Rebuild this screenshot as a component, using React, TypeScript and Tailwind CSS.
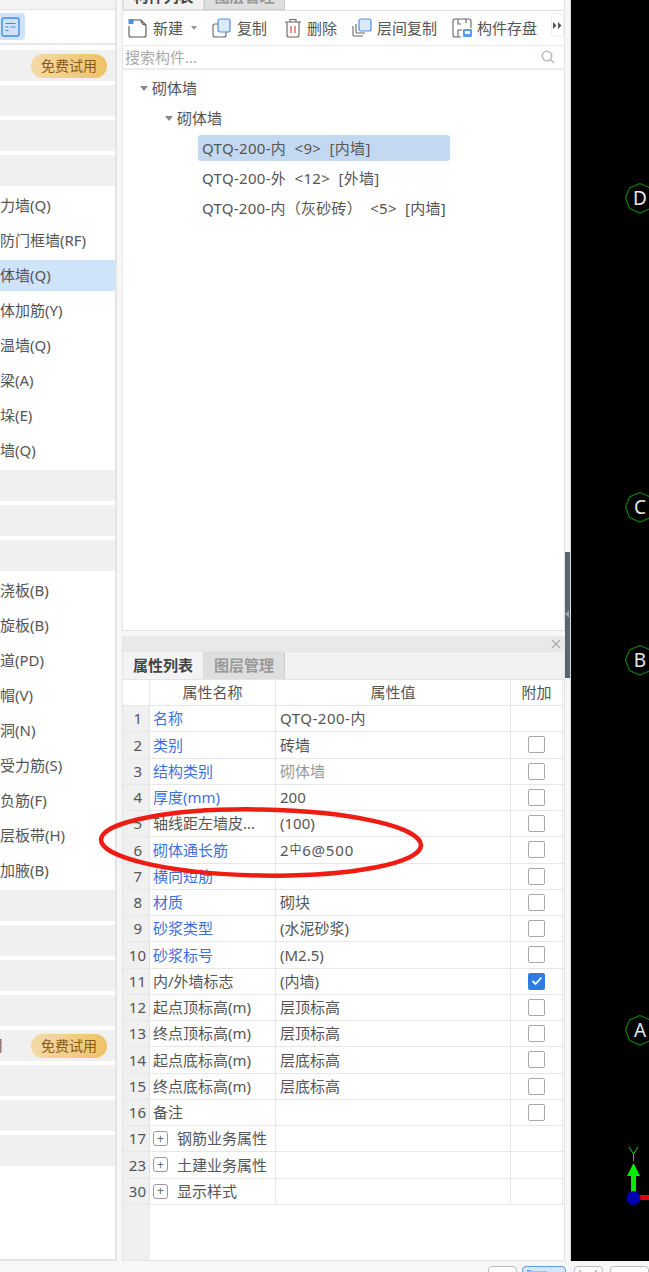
import React from "react";

const font = { fontFamily: '"Noto Sans", "Noto Sans CJK SC", sans-serif' };

function Badge() {
  return (
    <span className="mr-[8px] ml-auto flex h-[24px] w-[76px] shrink-0 items-center justify-center rounded-full bg-gradient-to-r from-[#f5d9a8] to-[#eec264] text-[14px] text-[#8a5a1a]">
      免费试用
    </span>
  );
}

function GrayRow({ badge }: { badge?: boolean }) {
  return (
    <div className="mb-[4px] flex h-[31px] items-center bg-[#f0f0f0]">
      {badge && <Badge />}
    </div>
  );
}

function TextRow({ t, sel }: { t: string; sel?: boolean }) {
  return (
    <div className={`mb-[4px] flex h-[31px] items-center whitespace-nowrap text-[15px] text-[#555] ${sel ? "bg-[#cfe3f9]" : ""}`}>
      {t}
    </div>
  );
}

function Sidebar() {
  const a = ["力墙(Q)", "防门框墙(RF)", "体墙(Q)", "体加筋(Y)", "温墙(Q)", "梁(A)", "垛(E)", "墙(Q)"];
  const b = ["浇板(B)", "旋板(B)", "道(PD)", "帽(V)", "洞(N)", "受力筋(S)", "负筋(F)", "层板带(H)", "加腋(B)"];
  return (
    <div className="flex h-full w-[117px] shrink-0 flex-col border-r-2 border-b-2 border-[#e4e4e4] bg-white">
      <div className="h-[10px] border-b border-[#e4e4e4] bg-[#f3f3f3]" />
      <div className="flex h-[35px] items-center border-b-2 border-[#e8e8e8]">
        <div className="flex h-[27px] w-[25px] items-center justify-start rounded-r-[4px] bg-[#cfe2f8] pl-[1px]">
          <svg width="19" height="20" viewBox="0 0 19 20" fill="none">
            <rect x="1" y="1" width="17" height="18" rx="2" stroke="#3f8ce8" strokeWidth="1.4" />
            <path d="M4.5 6.5h10M4.5 10h3M9.5 10h5M4.5 13.5h3" stroke="#3f8ce8" strokeWidth="1.2" />
          </svg>
        </div>
      </div>
      <div className="h-[5px]" />
      <GrayRow badge />
      <GrayRow />
      <GrayRow />
      <GrayRow />
      {a.map((t, i) => (
        <TextRow key={t} t={t} sel={i === 2} />
      ))}
      <GrayRow />
      <GrayRow />
      <GrayRow />
      {b.map((t) => (
        <TextRow key={t} t={t} />
      ))}
      <GrayRow />
      <GrayRow />
      <GrayRow />
      <GrayRow />
      <div className="mb-[4px] flex h-[31px] items-center overflow-hidden bg-[#f0f0f0]">
        <span className="ml-[-12px] text-[15px] text-[#666]">用</span>
        <Badge />
      </div>
      <GrayRow />
      <GrayRow />
      <GrayRow />
    </div>
  );
}

function Tool({ icon, label, extra }: { icon: React.ReactNode; label: string; extra?: React.ReactNode }) {
  return (
    <div className="flex items-center gap-[5px] whitespace-nowrap text-[15px] text-[#555]">
      {icon}
      <span>{label}</span>
      {extra}
    </div>
  );
}

function Toolbar() {
  return (
    <div className="flex h-[35px] items-center border-b border-[#e8e8e8] pl-[5px]">
      <div className="mr-[15px]">
        <Tool
          label="新建"
          extra={<span className="ml-[3px] h-0 w-0 border-x-[3px] border-t-[4px] border-x-transparent border-t-[#999]" />}
          icon={
            <svg width="20" height="20" viewBox="0 0 20 20" fill="none">
              <path d="M5 2h8l5 5v10a2 2 0 0 1-2 2H3a2 2 0 0 1-2-2V8" stroke="#555" strokeWidth="1.1" />
              <path d="M13 2c0 3 1.5 5 5 5" stroke="#555" strokeWidth="1.1" />
              <rect x="0.5" y="1" width="5" height="5" fill="#4a90e8" />
            </svg>
          }
        />
      </div>
      <div className="mr-[17px]">
        <Tool
          label="复制"
          icon={
            <svg width="20" height="20" viewBox="0 0 20 20" fill="none">
              <rect x="1" y="6" width="13" height="13" rx="2" stroke="#666" strokeWidth="1.1" />
              <rect x="6" y="1" width="12" height="13" rx="2" fill="#dbe9fb" stroke="#4a90e8" strokeWidth="1.2" />
            </svg>
          }
        />
      </div>
      <div className="mr-[15px]">
        <Tool
          label="删除"
          icon={
            <svg width="18" height="20" viewBox="0 0 18 20" fill="none">
              <path d="M1 4h16M6 4V1.5h6V4" stroke="#666" strokeWidth="1.1" />
              <path d="M3 4v13a2 2 0 0 0 2 2h8a2 2 0 0 0 2-2V4" stroke="#666" strokeWidth="1.1" />
              <path d="M7 8v7M11 8v7" stroke="#e0453a" strokeWidth="1.2" />
            </svg>
          }
        />
      </div>
      <div className="mr-[15px]">
        <Tool
          label="层间复制"
          icon={
            <svg width="20" height="20" viewBox="0 0 20 20" fill="none">
              <path d="M1 8v9a1 1 0 0 0 1 1h9" stroke="#666" strokeWidth="1.1" />
              <path d="M4 6v8a1 1 0 0 0 1 1h8" stroke="#666" strokeWidth="1.1" />
              <rect x="7" y="1" width="12" height="12" rx="2" fill="#dbe9fb" stroke="#4a90e8" strokeWidth="1.2" />
            </svg>
          }
        />
      </div>
      <Tool
        label="构件存盘"
        icon={
          <svg width="20" height="20" viewBox="0 0 20 20" fill="none">
            <path d="M9 19H3a2 2 0 0 1-2-2V3a2 2 0 0 1 2-2h14a2 2 0 0 1 2 2v7" stroke="#666" strokeWidth="1.1" />
            <path d="M6 1v5h3M14 1v4M6 19v-7h4" stroke="#666" strokeWidth="1.1" />
            <rect x="11" y="11" width="9" height="8" rx="1" fill="#5a9fee" />
            <rect x="13" y="13" width="5" height="3" fill="#fff" />
          </svg>
        }
      />
      <div className="mt-[-6px] ml-auto flex h-[24px] w-[13px] items-center justify-center rounded-[4px] border border-[#eee] text-[#555]">
        <svg width="9" height="7" viewBox="0 0 9 7" fill="#555">
          <path d="M0 0l3.5 3.5L0 7zM5 0l3.5 3.5L5 7z" />
        </svg>
      </div>
    </div>
  );
}

function TreeRow({ children, pl, caret, sel }: { children: React.ReactNode; pl: string; caret?: boolean; sel?: boolean }) {
  return (
    <div className={`flex h-[30px] items-center whitespace-pre ${pl}`}>
      {caret && <span className="mr-[4px] h-0 w-0 border-x-[4px] border-t-[5px] border-x-transparent border-t-[#888]" />}
      {sel ? (
        <span className="flex h-[26px] w-[252px] items-center rounded-[3px] bg-[#c3d9f1] pl-[4px]">{children}</span>
      ) : (
        children
      )}
    </div>
  );
}

function ComponentList() {
  return (
    <div className="flex h-[631px] flex-col border-x border-b border-[#e4e4e4] bg-white">
      <div className="flex h-[11px] items-end overflow-hidden border-b border-[#e0e0e0] bg-white">
        <div className="flex h-[28px] w-[81px] shrink-0 items-center justify-center border border-[#ddd] bg-[#f2f2f2] text-[15px] font-bold text-[#444]">
          构件列表
        </div>
        <div className="flex h-[28px] w-[81px] shrink-0 items-center justify-center border border-[#ccc] bg-[#dedede] text-[15px] font-bold text-[#999]">
          图层管理
        </div>
      </div>
      <Toolbar />
      <div className="flex h-[24px] items-center justify-between border-b-2 border-[#ececec] pr-[9px] pl-[2px] text-[15px] text-[#aaa]">
        <span>搜索构件...</span>
        <svg width="14" height="14" viewBox="0 0 14 14" fill="none">
          <circle cx="6" cy="6" r="4.7" stroke="#bbb" strokeWidth="1.6" />
          <path d="M9.5 9.5L13 13" stroke="#bbb" strokeWidth="1.6" />
        </svg>
      </div>
      <div className="pt-[3px] text-[15px] text-[#555]">
        <TreeRow pl="pl-[17px]" caret>砌体墙</TreeRow>
        <TreeRow pl="pl-[42px]" caret>砌体墙</TreeRow>
        <TreeRow pl="pl-[75px]" sel><span className="tracking-[0.3px]">{"QTQ-200-内  <9>  [内墙]"}</span></TreeRow>
        <TreeRow pl="pl-[79px]"><span className="tracking-[0.3px]">{"QTQ-200-外  <12>  [外墙]"}</span></TreeRow>
        <TreeRow pl="pl-[79px]"><span className="tracking-[0.25px]">{"QTQ-200-内（灰砂砖）  <5>  [内墙]"}</span></TreeRow>
      </div>
    </div>
  );
}

type Row = { n: number; name: string; blue?: boolean; value?: React.ReactNode; light?: boolean; cb?: boolean; checked?: boolean; plus?: boolean };

const rows: Row[] = [
  { n: 1, name: "名称", blue: true, value: <span className="tracking-[0.5px]">QTQ-200-内</span> },
  { n: 2, name: "类别", blue: true, value: "砖墙", cb: true },
  { n: 3, name: "结构类别", blue: true, value: "砌体墙", light: true, cb: true },
  { n: 4, name: "厚度(mm)", blue: true, value: "200", cb: true },
  { n: 5, name: "轴线距左墙皮...", value: "(100)", cb: true },
  {
    n: 6,
    name: "砌体通长筋",
    blue: true,
    value: (
      <span className="tracking-[0.8px]">
        2<span className="relative top-[-2px] text-[12px]">中</span>6@500
      </span>
    ),
    cb: true,
  },
  { n: 7, name: "横向短筋", blue: true, cb: true },
  { n: 8, name: "材质", blue: true, value: "砌块", cb: true },
  { n: 9, name: "砂浆类型", blue: true, value: "(水泥砂浆)", cb: true },
  { n: 10, name: "砂浆标号", blue: true, value: "(M2.5)", cb: true },
  { n: 11, name: "内/外墙标志", value: "(内墙)", cb: true, checked: true },
  { n: 12, name: "起点顶标高(m)", value: "层顶标高", cb: true },
  { n: 13, name: "终点顶标高(m)", value: "层顶标高", cb: true },
  { n: 14, name: "起点底标高(m)", value: "层底标高", cb: true },
  { n: 15, name: "终点底标高(m)", value: "层底标高", cb: true },
  { n: 16, name: "备注", cb: true },
  { n: 17, name: "钢筋业务属性", plus: true },
  { n: 23, name: "土建业务属性", plus: true },
  { n: 30, name: "显示样式", plus: true },
];

function Check({ checked }: { checked?: boolean }) {
  if (checked)
    return (
      <span className="flex h-[17px] w-[17px] items-center justify-center rounded-[2px] bg-[#2f7be6]">
        <svg width="12" height="10" viewBox="0 0 12 10" fill="none">
          <path d="M1.5 5l3 3 6-6.5" stroke="#fff" strokeWidth="1.8" />
        </svg>
      </span>
    );
  return <span className="h-[17px] w-[17px] rounded-[2px] border border-[#a8a8a8] bg-white" />;
}

function TableRow({ r }: { r: Row }) {
  return (
    <div className="flex h-[26.25px] border-b border-[#e6e6e6] text-[15px] text-[#555]">
      <div className="flex w-[27px] shrink-0 items-center justify-end border-r border-[#e0e0e0] bg-[#f0f0f0] pr-[3px] text-[#555]">
        <span className={r.n < 10 ? "pr-[4px]" : ""}>{r.n}</span>
      </div>
      <div className={`flex w-[126px] shrink-0 items-center gap-[9px] border-r border-[#e6e6e6] pl-[3px] ${r.blue ? "text-[#3f6fe0]" : ""}`}>
        {r.plus && (
          <span className="flex h-[15px] w-[15px] items-center justify-center rounded-[3px] border border-[#999] text-[12px] leading-none text-[#666]">
            +
          </span>
        )}
        <span className="whitespace-nowrap">{r.name}</span>
      </div>
      <div className={`flex w-[235px] shrink-0 items-center border-r border-[#e6e6e6] pl-[4px] ${r.light ? "text-[#999]" : ""}`}>
        {r.value}
      </div>
      <div className="flex w-[52px] shrink-0 items-center justify-center border-r border-[#e6e6e6]">
        {r.cb && <Check checked={r.checked} />}
      </div>
    </div>
  );
}

function PropertyList() {
  return (
    <div className="flex min-h-0 flex-1 flex-col border-x border-b border-[#e4e4e4] bg-white">
      <div className="flex h-[15px] items-center justify-end bg-[#e9e9e9] pr-[3px]">
        <svg width="10" height="10" viewBox="0 0 10 10" fill="none">
          <path d="M1 1l8 8M9 1l-8 8" stroke="#aaa" strokeWidth="1.1" />
        </svg>
      </div>
      <div className="flex h-[29px] items-stretch border-y border-[#e4e4e4] bg-[#f1f1f1]">
        <div className="flex w-[81px] items-center justify-center border-r border-[#ddd] bg-[#f3f3f3] text-[15px] font-bold text-[#444]">
          属性列表
        </div>
        <div className="flex w-[81px] items-center justify-center border-r border-[#ccc] bg-[#dedede] text-[15px] font-bold text-[#999]">
          图层管理
        </div>
      </div>
      <div className="flex h-[26px] border-b border-[#e6e6e6] text-[15px] text-[#555]">
        <div className="w-[27px] shrink-0 border-r border-[#e6e6e6] bg-white" />
        <div className="flex w-[126px] shrink-0 items-center justify-center border-r border-[#e6e6e6]">属性名称</div>
        <div className="flex w-[235px] shrink-0 items-center justify-center border-r border-[#e6e6e6]">属性值</div>
        <div className="flex w-[52px] shrink-0 items-center justify-center border-r border-[#e6e6e6]">附加</div>
      </div>
      {rows.map((r) => (
        <TableRow key={r.n} r={r} />
      ))}
      <div className="flex-1">
        <div className="h-full w-[27px] bg-[#f0f0f0]" />
      </div>
    </div>
  );
}

function Axis({ label }: { label: string }) {
  return (
    <div className="relative flex h-[32px] w-[32px] items-center justify-center">
      <svg className="absolute inset-0" width="32" height="32" viewBox="0 0 32 32" fill="none">
        <path d="M16 1.5l10.5 4.5 4 10-4 10.5L16 31l-10.5-4.5-4-10.5 4-10z" stroke="#0f7a0f" strokeWidth="1.2" />
      </svg>
      <span className="relative text-[19px] leading-none text-[#e8e8e8]">{label}</span>
    </div>
  );
}

function Canvas() {
  return (
    <div className="relative h-full min-w-0 flex-1 overflow-hidden border-l border-[#ddd] bg-black">
      <div className="absolute top-[182px] left-[53px]"><Axis label="D" /></div>
      <div className="absolute top-[491px] left-[53px]"><Axis label="C" /></div>
      <div className="absolute top-[644px] left-[53px]"><Axis label="B" /></div>
      <div className="absolute top-[1014px] left-[53px]"><Axis label="A" /></div>
      <svg className="absolute top-[1140px] left-[50px]" width="29" height="70" viewBox="0 0 29 70" fill="none">
        <path d="M8 7l4.5 7v7M17 7l-4.5 7" stroke="#22cc22" strokeWidth="1" />
        <path d="M12.5 23l6.5 13h-4v22h-5V36H6z" fill="#00ee00" />
        <rect x="18" y="55" width="11" height="5" fill="#ee0000" />
        <circle cx="12.5" cy="58" r="7" fill="#0000b0" />
      </svg>
    </div>
  );
}

export default function App() {
  return (
    <div className="relative flex h-[1272px] w-[649px] flex-col overflow-hidden bg-[#f7f7f7]" style={font}>
      <div className="flex h-[1261px] shrink-0">
        <Sidebar />
        <div className="w-[5px] shrink-0" />
        <div className="flex h-full w-[443px] shrink-0 flex-col">
          <ComponentList />
          <div className="h-[5px]" />
          <PropertyList />
        </div>
        <div className="relative w-[5px] shrink-0">
          <div className="absolute top-[552px] h-[126px] w-[5px] bg-[#5b6470]">
            <span className="absolute top-[58px] left-[0px] h-0 w-0 border-y-[4px] border-r-[4px] border-y-transparent border-r-[#9aa2ac]" />
          </div>
        </div>
        <Canvas />
      </div>
      <div className="flex flex-1 items-start gap-[5px] bg-[#f7f7f7] pt-[5px] pl-[488px]">
        <div className="h-[12px] w-[30px] rounded-t-[4px] border border-[#bbb] bg-white" />
        <div className="flex h-[12px] w-[45px] items-start justify-start rounded-t-[4px] border border-[#5a9fee] bg-[#d6e6fa] pt-[3px] pl-[4px]">
          <svg width="20" height="5" viewBox="0 0 20 5" fill="none">
            <path d="M0 2h6M0 0.5h4M6 2h14" stroke="#5a9fee" strokeWidth="1" />
          </svg>
        </div>
        <div className="ml-[3px] flex h-[12px] w-[31px] items-start justify-center rounded-t-[4px] border border-[#bbb] bg-white pt-[3px]">
          <svg width="20" height="5" viewBox="0 0 20 5" fill="none">
            <path d="M1 0l4 4M19 0l-4 4" stroke="#888" strokeWidth="1" />
          </svg>
        </div>
        <div className="ml-[2px] h-[12px] w-[40px] rounded-t-[4px] border border-[#bbb] bg-white" />
      </div>
      <svg className="pointer-events-none absolute top-[800px] left-[95px]" width="335" height="85" viewBox="0 0 335 85" fill="none">
        <ellipse cx="166" cy="42.5" rx="160" ry="33" transform="rotate(1 166 42)" stroke="#ee1c12" strokeWidth="4.5" />
      </svg>
    </div>
  );
}
